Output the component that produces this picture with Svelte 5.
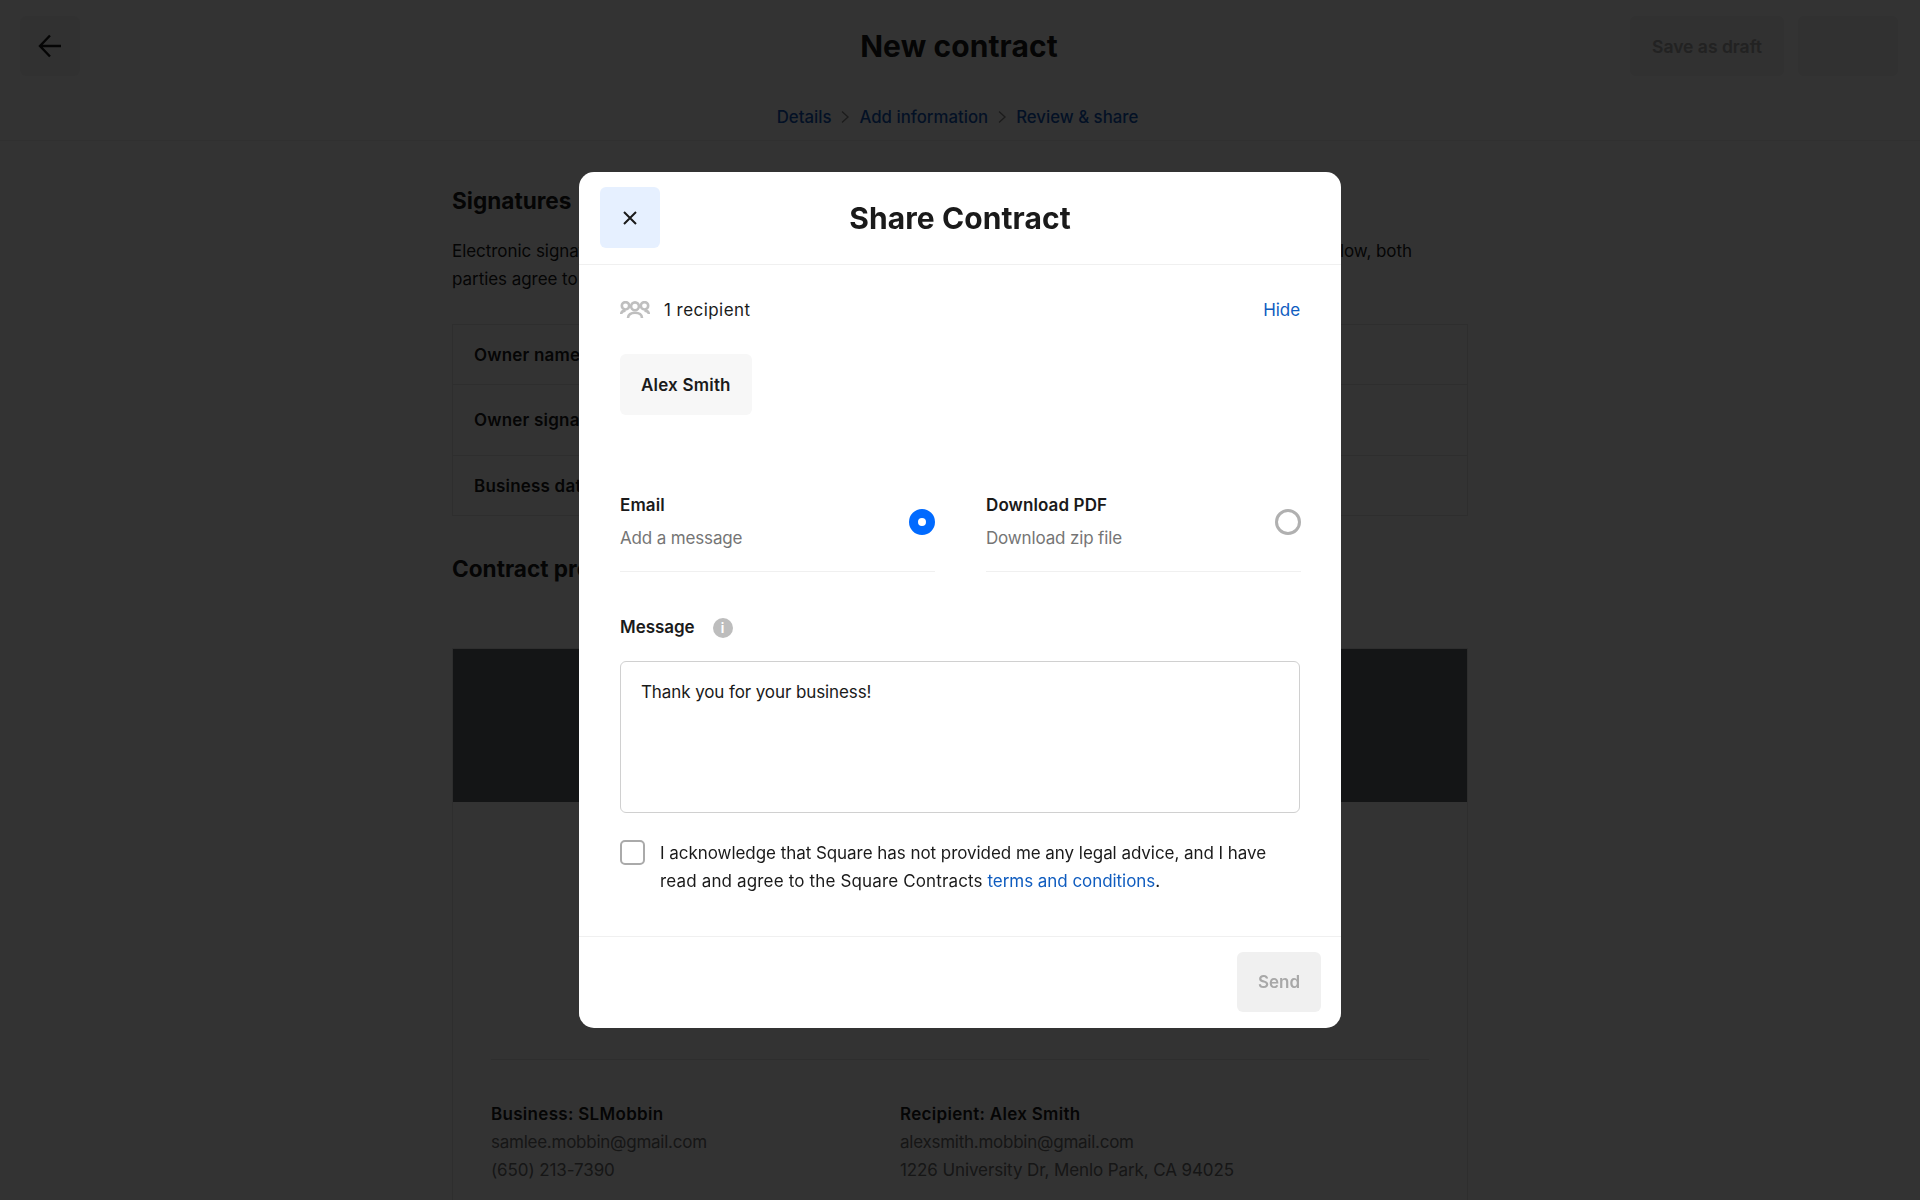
<script lang="ts">
  let message = $state('Thank you for your business!');
  let method = $state('email');
  let agreed = $state(false);

  const rows = ['Owner name', 'Owner signature', 'Business date'];
</script>

<div class="page">
  <header class="topbar">
    <button class="back" aria-label="Back">
      <svg width="24" height="24" viewBox="0 0 24 24" fill="none" stroke="#1a1a1a" stroke-width="2.4">
        <path d="M23 12H2M12 1.500 2 12l10 10.500" />
      </svg>
    </button>
    <h1>New contract</h1>
    <div class="actions">
      <button class="draft">Save as draft</button>
      <button class="next" aria-label="Next"></button>
    </div>
  </header>

  <nav class="crumbs">
    <span>Details</span>
    <svg width="10" height="14" viewBox="0 0 10 14" fill="none" stroke="#8a8a8a" stroke-width="1.4"><path d="m2 1.500 6 5.500-6 5.500" /></svg>
    <span>Add information</span>
    <svg width="10" height="14" viewBox="0 0 10 14" fill="none" stroke="#8a8a8a" stroke-width="1.4"><path d="m2 1.500 6 5.500-6 5.500" /></svg>
    <span>Review &amp; share</span>
  </nav>

  <main class="content">
    <h2 class="sig-title">Signatures</h2>
    <p class="lead">Electronic signatures are legally binding and enforceable. By adding your signature to the contract as shown below, both<br />parties agree to its terms.</p>

    <div class="sig-table">
      {#each rows as row}
        <div class="sig-row">{row}</div>
      {/each}
    </div>

    <h2 class="preview-title">Contract preview</h2>

    <section class="preview">
      <div class="banner"></div>
      <div class="preview-body">
        <div class="parties">
          <div>
            <strong>Business: SLMobbin</strong>
            <span class="mail">samlee.mobbin@gmail.com</span>
            <span>(650) 213-7390</span>
          </div>
          <div>
            <strong>Recipient: Alex Smith</strong>
            <span class="mail">alexsmith.mobbin@gmail.com</span>
            <span>1226 University Dr, Menlo Park, CA 94025</span>
          </div>
        </div>
      </div>
    </section>
  </main>
</div>

<div class="overlay">
  <div class="modal" role="dialog" aria-label="Share Contract">
    <div class="modal-header">
      <button class="close" aria-label="Close">
        <svg width="16" height="16" viewBox="0 0 16 16" fill="none" stroke="#1a1a1a" stroke-width="2">
          <path d="m2 2 12 12M14 2 2 14" />
        </svg>
      </button>
      <h2>Share Contract</h2>
    </div>

    <div class="modal-body">
      <div class="recipients">
        <svg width="30" height="18" viewBox="0 0 30 18" fill="none" stroke="#bfbfbf" stroke-width="2.600">
          <circle cx="5.500" cy="4.800" r="3.700" />
          <circle cx="24.500" cy="4.800" r="3.700" />
          <path d="M1.200 13c0-2 1.500-3.200 4.300-3.400M28.800 13c0-2-1.500-3.200-4.300-3.400" />
          <circle cx="15" cy="5.300" r="3.900" />
          <path d="M8 17c0-3.300 2.800-5.300 7-5.300s7 2 7 5.300" />
        </svg>
        <span class="count">1 recipient</span>
        <a href="#hide" class="hide">Hide</a>
      </div>

      <div class="chip">Alex Smith</div>

      <div class="methods">
        <label class="method">
          <span class="method-text">
            <strong>Email</strong>
            <span>Add a message</span>
          </span>
          <input type="radio" name="method" value="email" bind:group={method} />
        </label>
        <label class="method">
          <span class="method-text">
            <strong>Download PDF</strong>
            <span>Download zip file</span>
          </span>
          <input type="radio" name="method" value="pdf" bind:group={method} />
        </label>
      </div>

      <div class="message-label">
        <strong>Message</strong>
        <span class="info">i</span>
      </div>
      <textarea bind:value={message}></textarea>

      <label class="ack">
        <input type="checkbox" bind:checked={agreed} />
        <span>I acknowledge that Square has not provided me any legal advice, and I have <span class="wide">read and agree to the Square Contracts</span> <a href="#terms">terms and conditions</a>.</span>
      </label>
    </div>

    <div class="modal-footer">
      <button class="send" disabled={!agreed}>Send</button>
    </div>
  </div>
</div>

<style>
  :global(body) {
    background: #fff;
    overflow: hidden;
    font-family: Inter, 'Noto Sans', sans-serif;
    color: #1a1a1a;
  }

  button {
    font-family: inherit;
    border: none;
    border-radius: 6px;
  }

  .page {
    height: 1200px;
    overflow: hidden;
  }

  .topbar {
    display: grid;
    grid-template-columns: 1fr auto 1fr;
    align-items: center;
    padding: 16px 22px 0 20px;
  }

  .topbar h1 {
    margin: 0;
    font-size: 30px;
    font-weight: 700;
    letter-spacing: 0.1px;
  }

  .back {
    width: 60px;
    height: 60px;
    background: #f5f5f5;
    display: flex;
    align-items: center;
    justify-content: center;
    padding: 0;
  }

  .actions {
    display: flex;
    justify-content: flex-end;
    gap: 14px;
  }

  .draft {
    width: 154px;
    height: 60px;
    background: #f2f2f2;
    color: #a8a8a8;
    font-size: 17.500px;
    font-weight: 600;
  }

  .next {
    width: 100px;
    height: 60px;
    background: #f2f2f2;
  }

  .crumbs {
    display: flex;
    justify-content: center;
    align-items: center;
    gap: 9px;
    margin-top: 29px;
    padding: 0 5px 11px 0;
    border-bottom: 1px solid #f0f0f0;
    font-size: 16.800px;
    line-height: 24px;
    font-weight: 500;
    color: #1358b8;
  }

  .content {
    width: 1016px;
    margin: 0 auto;
  }

  .sig-title,
  .preview-title {
    margin: 0;
    font-size: 22.600px;
    line-height: 28px;
    font-weight: 700;
  }

  .sig-title {
    margin-top: 46px;
  }

  .lead {
    margin: 22px 0 0;
    font-size: 17px;
    line-height: 28px;
    letter-spacing: -0.05px;
    white-space: nowrap;
  }

  .sig-table {
    margin-top: 31px;
    border: 1px solid #e6e6e6;
  }

  .sig-row {
    padding: 0 21px;
    height: 59px;
    display: flex;
    align-items: center;
    font-size: 17px;
    font-weight: 600;
    letter-spacing: 0.2px;
    border-bottom: 1px solid #e6e6e6;
  }

  .sig-row:nth-child(2) {
    height: 70px;
  }

  .sig-row:last-child {
    border-bottom: none;
  }

  .preview-title {
    margin-top: 39px;
  }

  .preview {
    margin-top: 65px;
    height: 700px;
    border: 1px solid #e6e6e6;
  }

  .banner {
    height: 153px;
    background: #636c70;
  }

  .preview-body {
    margin: 257px 38px 0;
    border-top: 1px solid #e6e6e6;
    padding-top: 40px;
  }

  .parties {
    display: grid;
    grid-template-columns: 409px 1fr;
    font-size: 17px;
    line-height: 28px;
    letter-spacing: -0.1px;
    color: #6e6e6e;
  }

  .parties div {
    display: flex;
    flex-direction: column;
  }

  .parties strong {
    color: #1a1a1a;
    font-weight: 600;
    letter-spacing: 0.3px;
  }

  .parties .mail {
    letter-spacing: -0.25px;
  }

  .overlay {
    position: fixed;
    inset: 0;
    background: rgba(0, 0, 0, 0.8);
    display: flex;
    align-items: center;
    justify-content: center;
  }

  .modal {
    width: 762px;
    height: 856px;
    background: #fff;
    border-radius: 15px;
    display: flex;
    flex-direction: column;
  }

  .modal-header {
    position: relative;
    height: 92px;
    flex: none;
    border-bottom: 1px solid #f0f0f0;
    display: flex;
    align-items: center;
    justify-content: center;
  }

  .modal-header h2 {
    margin: 0;
    font-size: 30px;
    font-weight: 700;
    letter-spacing: 0.1px;
  }

  .close {
    position: absolute;
    left: 21px;
    top: 15px;
    width: 60px;
    height: 61px;
    background: #e6f0ff;
    display: flex;
    align-items: center;
    justify-content: center;
    padding: 0;
  }

  .modal-body {
    flex: 1;
    padding: 33px 41px 0 41px;
    font-size: 17px;
    letter-spacing: -0.05px;
  }

  .recipients {
    display: flex;
    align-items: center;
    height: 24px;
  }

  .count {
    margin-left: 14px;
    letter-spacing: 0.45px;
  }

  .hide {
    margin-left: auto;
  }

  a {
    color: #0f5cbf;
    text-decoration: none;
  }

  .chip {
    display: inline-flex;
    align-items: center;
    margin-top: 32px;
    height: 61px;
    padding: 0 21px;
    background: #f7f7f7;
    border-radius: 6px;
    font-weight: 600;
    letter-spacing: 0.2px;
  }

  .methods {
    display: grid;
    grid-template-columns: 315px 315px;
    column-gap: 51px;
    margin-top: 72px;
  }

  .method {
    display: flex;
    align-items: center;
    justify-content: space-between;
    box-sizing: border-box;
    height: 85px;
    padding-bottom: 15px;
    border-bottom: 1px solid #f0f0f0;
  }

  .method-text {
    display: flex;
    flex-direction: column;
    gap: 9px;
    line-height: 24px;
    color: #757575;
    letter-spacing: -0.15px;
  }

  .method-text strong {
    color: #1a1a1a;
    font-weight: 600;
    letter-spacing: 0.1px;
  }

  input[type='radio'] {
    appearance: none;
    margin: 0;
    width: 26px;
    height: 26px;
    border-radius: 50%;
    border: 3px solid #b0b0b0;
    background: #fff;
  }

  input[type='radio']:checked {
    border: 9px solid #006aff;
    background: #fff;
  }

  .message-label {
    display: flex;
    align-items: center;
    gap: 18px;
    margin-top: 44px;
    height: 24px;
    font-size: 17px;
  }

  .message-label strong {
    font-weight: 600;
    margin-top: -2px;
  }

  .info {
    width: 20px;
    height: 20px;
    border-radius: 50%;
    background: #bdbdbd;
    color: #fff;
    font-size: 13px;
    font-weight: 700;
    display: flex;
    align-items: center;
    justify-content: center;
  }

  textarea {
    display: block;
    box-sizing: border-box;
    width: 100%;
    height: 152px;
    margin-top: 21px;
    padding: 17px 20px;
    border: 1px solid #d0d0d0;
    border-radius: 6px;
    font-family: inherit;
    font-size: 17px;
    letter-spacing: -0.1px;
    line-height: 26px;
    color: #1a1a1a;
    resize: none;
    outline: none;
  }

  .ack {
    display: flex;
    gap: 15px;
    margin-top: 26px;
    line-height: 28px;
    letter-spacing: -0.05px;
  }

  .wide {
    letter-spacing: 0.15px;
  }

  input[type='checkbox'] {
    appearance: none;
    flex: none;
    width: 25px;
    height: 25px;
    margin: 1px 0 0;
    border: 2.500px solid #aaa;
    border-radius: 5px;
    background: #fff;
  }

  .modal-footer {
    flex: none;
    height: 92px;
    box-sizing: border-box;
    border-top: 1px solid #f0f0f0;
    padding: 15px 20px 0 0;
    display: flex;
    justify-content: flex-end;
    align-items: flex-start;
  }

  .send {
    width: 84px;
    height: 60px;
    background: #f0f0f0;
    color: #a8a8a8;
    font-size: 17px;
    font-weight: 600;
  }
</style>
